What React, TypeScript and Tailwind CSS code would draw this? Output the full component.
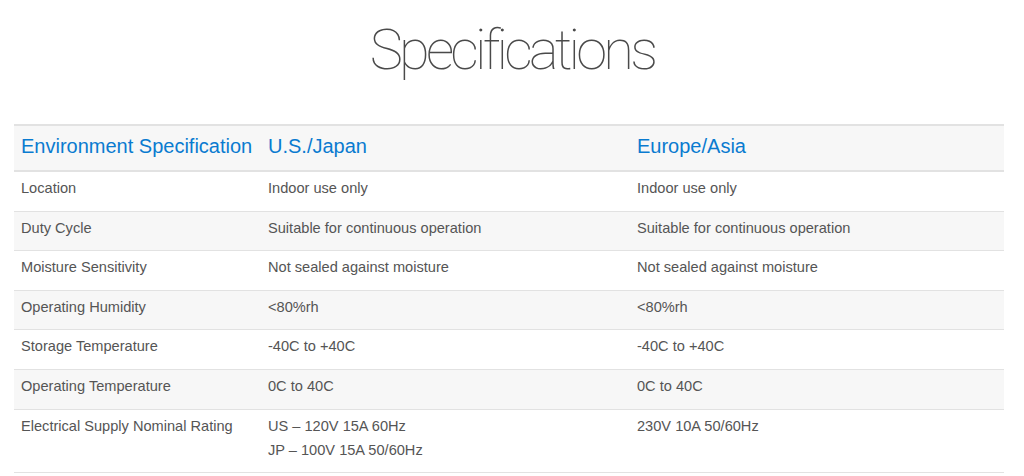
import React from 'react';

const rows: [string, string[], string[]][] = [
  ['Location', ['Indoor use only'], ['Indoor use only']],
  ['Duty Cycle', ['Suitable for continuous operation'], ['Suitable for continuous operation']],
  ['Moisture Sensitivity', ['Not sealed against moisture'], ['Not sealed against moisture']],
  ['Operating Humidity', ['<80%rh'], ['<80%rh']],
  ['Storage Temperature', ['-40C to +40C'], ['-40C to +40C']],
  ['Operating Temperature', ['0C to 40C'], ['0C to 40C']],
  ['Electrical Supply Nominal Rating', ['US – 120V 15A 60Hz', 'JP – 100V 15A 50/60Hz'], ['230V 10A 50/60Hz']],
];

const font = { fontFamily: '"Helvetica Neue", "Liberation Sans", Arial, sans-serif' };

export default function App() {
  return (
    <div className="w-[1024px] h-[476px] bg-white overflow-hidden" style={font}>
      <h1
        className="pt-[14px] h-[124px] text-center text-[56px] leading-[72px] font-thin tracking-[-3.8px] text-[#4a4a4a]"
        style={{ fontFamily: '"Helvetica Neue", Roboto, sans-serif' }}
      >
        Specifications
      </h1>
      <div className="mx-[14px] w-[990px]">
        <div className="grid grid-cols-[247px_369px_374px] bg-[#f7f7f7] border-t-2 border-b-2 border-[#e2e2e2] text-[20px] leading-[24px] text-[#0a7bd0]">
          <div className="pl-[7px] pt-[8px] pb-[12px] whitespace-nowrap">Environment Specification</div>
          <div className="pl-[7px] pt-[8px] pb-[12px]">U.S./Japan</div>
          <div className="pl-[7px] pt-[8px] pb-[12px]">Europe/Asia</div>
        </div>
        {rows.map(([label, a, b], i) => (
          <div
            key={label}
            className={`grid grid-cols-[247px_369px_374px] border-b border-[#e2e2e2] text-[14.6px] leading-[24px] text-[#555] ${i % 2 === 1 ? 'bg-[#f7f7f7]' : 'bg-white'}`}
          >
            <div className="pl-[7px] pt-[4px] pb-[10.6px]">{label}</div>
            <div className="pl-[7px] pt-[4px] pb-[10.6px]">
              {a.map((t) => (
                <div key={t}>{t}</div>
              ))}
            </div>
            <div className="pl-[7px] pt-[4px] pb-[10.6px]">
              {b.map((t) => (
                <div key={t}>{t}</div>
              ))}
            </div>
          </div>
        ))}
      </div>
    </div>
  );
}
